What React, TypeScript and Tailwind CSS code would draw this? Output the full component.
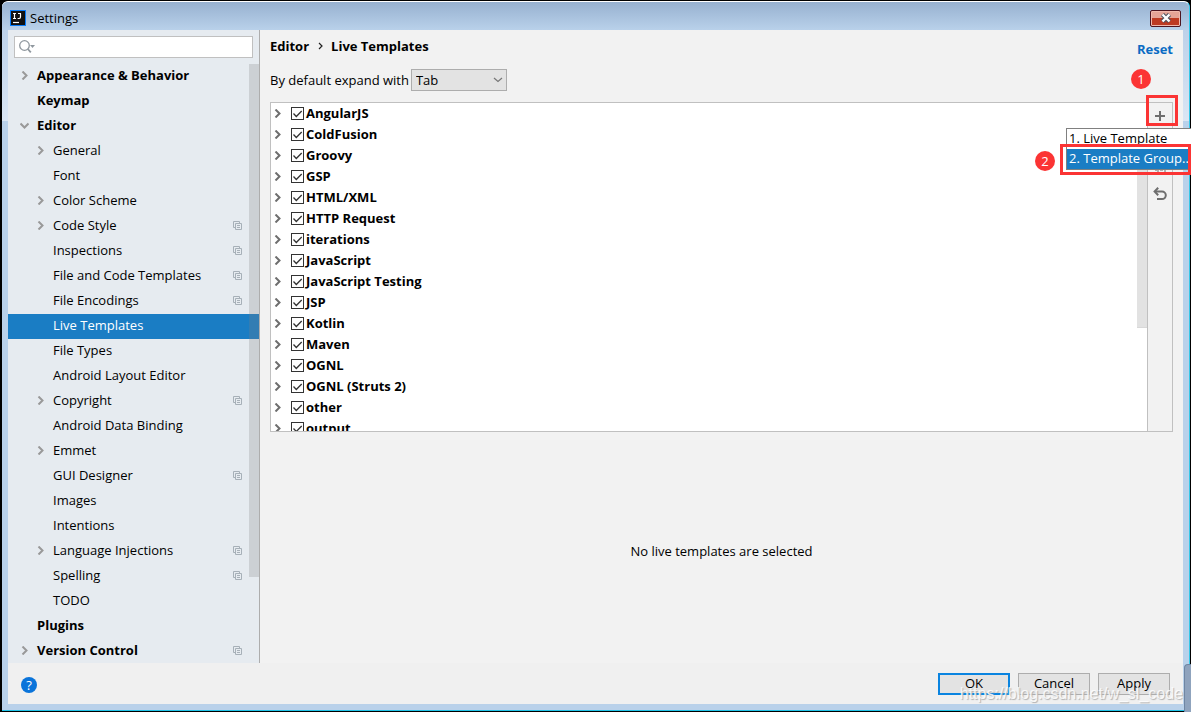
import { clsx } from "clsx";
import { useState, type ReactNode } from "react";

type TreeItem = {
  label: string;
  level: 0 | 1;
  state?: "open" | "closed";
  shared?: boolean;
};

const TREE: TreeItem[] = [
  { label: "Appearance & Behavior", level: 0, state: "closed" },
  { label: "Keymap", level: 0 },
  { label: "Editor", level: 0, state: "open" },
  { label: "General", level: 1, state: "closed" },
  { label: "Font", level: 1 },
  { label: "Color Scheme", level: 1, state: "closed" },
  { label: "Code Style", level: 1, state: "closed", shared: true },
  { label: "Inspections", level: 1, shared: true },
  { label: "File and Code Templates", level: 1, shared: true },
  { label: "File Encodings", level: 1, shared: true },
  { label: "Live Templates", level: 1 },
  { label: "File Types", level: 1 },
  { label: "Android Layout Editor", level: 1 },
  { label: "Copyright", level: 1, state: "closed", shared: true },
  { label: "Android Data Binding", level: 1 },
  { label: "Emmet", level: 1, state: "closed" },
  { label: "GUI Designer", level: 1, shared: true },
  { label: "Images", level: 1 },
  { label: "Intentions", level: 1 },
  { label: "Language Injections", level: 1, state: "closed", shared: true },
  { label: "Spelling", level: 1, shared: true },
  { label: "TODO", level: 1 },
  { label: "Plugins", level: 0 },
  { label: "Version Control", level: 0, state: "closed", shared: true },
];

const GROUPS = [
  "AngularJS",
  "ColdFusion",
  "Groovy",
  "GSP",
  "HTML/XML",
  "HTTP Request",
  "iterations",
  "JavaScript",
  "JavaScript Testing",
  "JSP",
  "Kotlin",
  "Maven",
  "OGNL",
  "OGNL (Struts 2)",
  "other",
  "output",
];

export default function App() {
  return (
    <div className="relative flex h-screen flex-col overflow-hidden bg-black pt-px pr-px pb-px pl-0.5 font-['Open_Sans','Noto_Sans',sans-serif] text-[13px] leading-4 text-black">
      <div className="flex min-h-0 flex-1 flex-col rounded-t-md border-t border-r border-b border-t-white border-r-[#35c8e8] border-b-[#20c4e8] bg-[#b9d1ea] bg-linear-to-b from-[#b4cbe6] to-[#dae6f4] bg-size-[100%_119px] bg-no-repeat px-1.5 pb-1.5">
        <TitleBar />
        <div className="flex min-h-0 flex-1 flex-col bg-[#f0f0f0]">
          <div className="flex min-h-0 flex-1">
            <Sidebar />
            <LiveTemplates />
          </div>
          <Footer />
        </div>
      </div>
      <div className="absolute right-0 bottom-0 h-12 w-[7px] rounded-tl-sm border-t border-l border-[#6f86a3] bg-[#8fa3bd]" />
      <AddMenu />
      <Callouts />
      <span className="pointer-events-none absolute right-2 bottom-2 font-['Liberation_Sans',sans-serif] text-base leading-5 text-white/80 [text-shadow:1px_1px_1px_#b0b0b0]">
        https://blog.csdn.net/w_sl_code
      </span>
    </div>
  );
}

function TitleBar() {
  return (
    <header className="-mx-1.5 flex h-7 shrink-0 items-center gap-1 rounded-t-md bg-linear-to-b from-[#97b1d0] to-[#b9d1ea] pr-2 pl-2">
      <svg width="16" height="16" viewBox="0 0 16 16" className="mt-1">
        <rect width="16" height="16" fill="#087cfa" />
        <rect x="1" y="1" width="14" height="14" fill="#111" />
        <path
          d="M3 3.5h3M4.5 3.5v5M3 8.5h3M8 3.5h3M10.5 3.5v3.6q0 1.4-1.3 1.4H7.6"
          fill="none"
          stroke="#fff"
          strokeWidth="1.2"
        />
        <path d="M3 12.5h6" stroke="#fff" strokeWidth="1.2" />
      </svg>
      <h1 className="mt-1 flex-1">Settings</h1>
      <button
        type="button"
        aria-label="Close"
        className="mt-1 flex h-[17px] w-[31px] items-center justify-center rounded-xs border border-[#4d1520] bg-linear-to-b from-[#e5a497] from-45% to-[#bd3a22] to-50% shadow-[inset_0_0_0_1px_#f0b8ac]"
      >
        <svg width="12" height="10" viewBox="0 0 12 10">
          <path d="M2.5 1.5l7 7M9.5 1.5l-7 7" stroke="#4f5460" strokeWidth="4.4" />
          <path d="M2.5 1.5l7 7M9.5 1.5l-7 7" stroke="#fff" strokeWidth="2.4" />
        </svg>
      </button>
    </header>
  );
}

function Sidebar() {
  const [selected, setSelected] = useState("Live Templates");

  return (
    <aside className="flex w-[252px] shrink-0 flex-col border-r border-[#adadad] bg-[#e6ebf0]">
      <div className="px-1.5 pt-1.5 pb-1.5">
        <label className="flex h-[22px] items-center border border-[#c0c0c0] bg-white pl-1">
          <svg width="18" height="14" viewBox="0 0 18 14" fill="none">
            <circle cx="5.5" cy="5.5" r="4.8" stroke="#8f979e" strokeWidth="1.3" />
            <path d="M8.8 9l3 3.4" stroke="#8f979e" strokeWidth="1.8" />
            <path d="M11 5h5l-2.5 3z" fill="#8f979e" />
          </svg>
          <input
            type="search"
            aria-label="Search settings"
            className="w-full min-w-0 flex-1 outline-none"
          />
        </label>
      </div>
      <nav className="relative min-h-0 flex-1 overflow-hidden">
        <ul>
          {TREE.map((item) => (
            <li key={item.label}>
              <button
                type="button"
                onClick={() => setSelected(item.label)}
                className={clsx(
                  "flex h-[25px] w-full items-center pr-[17px] pb-0.5 text-left",
                  item.level === 0 ? "pl-3 font-bold" : "pl-7",
                  item.label === selected && "bg-[#1a7dc4] text-white",
                )}
              >
                <span className="flex w-[17px] shrink-0">
                  {item.state && (
                    <Chevron open={item.state === "open"} className="text-[#999]" />
                  )}
                </span>
                <span className="flex-1 pb-px">{item.label}</span>
                {item.shared && <SharedIcon />}
              </button>
            </li>
          ))}
        </ul>
        <div className="absolute top-0 right-0 h-[513px] w-2.5 bg-[#808080]/25" />
      </nav>
    </aside>
  );
}

function LiveTemplates() {
  return (
    <main className="flex min-w-0 flex-1 flex-col bg-[#f2f2f2] pr-2.5 pl-2.5">
      <div className="flex items-start justify-between pt-2 font-bold">
        <h2 className="flex items-center">
          Editor
          <svg width="22" height="10" viewBox="0 0 22 10" fill="none">
            <path d="M10 2l3 3-3 3" stroke="#222" strokeWidth="1.2" />
          </svg>
          Live Templates
        </h2>
        <a href="#reset" className="mt-[3px] text-[#0a6cc4]">
          Reset
        </a>
      </div>
      <div className="mt-3 flex items-center gap-0.5">
        <label htmlFor="expand" className="pb-px">
          By default expand with
        </label>
        <div className="relative">
          <select
            id="expand"
            className="h-[22px] w-24 appearance-none border border-[#adadad] bg-[#e3e3e3] pl-1"
          >
            <option>Tab</option>
            <option>Enter</option>
            <option>Space</option>
          </select>
          <svg
            width="10"
            height="6"
            viewBox="0 0 10 6"
            fill="none"
            className="pointer-events-none absolute top-2 right-1"
          >
            <path d="M1 1l4 3.5L9 1" stroke="#777" strokeWidth="1.2" />
          </svg>
        </div>
      </div>
      <div className="mt-[11px] flex h-[330px] border border-[#c0c0c0]">
        <ul className="relative min-w-0 flex-1 overflow-hidden bg-white">
          {GROUPS.map((name) => (
            <TemplateGroup key={name} name={name} />
          ))}
          <li
            aria-hidden
            className="absolute top-8 right-0 h-[193px] w-2.5 border-b border-[#d8d8d8] bg-[#e2e2e2]"
          />
        </ul>
        <div className="flex w-[25px] flex-col items-center border-l border-[#c0c0c0]">
          <ToolButton label="Add">
            <path d="M8 3v10M3 8h10" strokeWidth="2" />
          </ToolButton>
          <ToolButton label="Remove">
            <path d="M3 8h10" strokeWidth="2" />
          </ToolButton>
          <ToolButton label="Duplicate">
            <path d="M6 6h7v8H6zM4 11V4h7M8 10h3" strokeWidth="1" />
          </ToolButton>
          <ToolButton label="Restore defaults">
            <path d="M3 5.5h7a3.8 3.8 0 0 1 0 7.6H5" strokeWidth="2" />
            <path d="M6.2 1.8L2.6 5.5l3.6 3.7" strokeWidth="2" />
          </ToolButton>
        </div>
      </div>
      <p className="flex flex-1 items-center justify-center pt-1.5">
        No live templates are selected
      </p>
    </main>
  );
}

function TemplateGroup({ name }: { name: string }) {
  return (
    <li className="flex h-[21px] items-center gap-[9px] pl-0.5">
      <button type="button" aria-label={`Expand ${name}`}>
        <Chevron className="text-[#6e6e6e]" />
      </button>
      <label className="flex items-center font-bold">
        <span className="relative mr-0.5 flex">
          <input
            type="checkbox"
            defaultChecked
            className="peer size-[13px] appearance-none border border-[#333] bg-white"
          />
          <svg
            width="13"
            height="13"
            viewBox="0 0 13 13"
            fill="none"
            className="pointer-events-none invisible absolute top-0 left-0 peer-checked:visible"
          >
            <path d="M2.5 6.5l2.8 3L10.7 4" stroke="#333" strokeWidth="1.3" />
          </svg>
        </span>
        <span className="pb-px">{name}</span>
      </label>
    </li>
  );
}

function ToolButton({ label, children }: { label: string; children: ReactNode }) {
  return (
    <button
      type="button"
      aria-label={label}
      className="flex h-[26px] w-full items-center justify-center text-[#6e6e6e]"
    >
      <svg width="16" height="16" viewBox="0 0 16 16" fill="none" stroke="currentColor">
        {children}
      </svg>
    </button>
  );
}

function AddMenu() {
  return (
    <div
      role="menu"
      className="absolute top-32 right-0 w-[125px] border border-r-0 border-[#808080] bg-white"
    >
      <button
        type="button"
        role="menuitem"
        className="block h-5 w-full pb-0.5 pl-0.5 text-left whitespace-nowrap"
      >
        1. Live Template
      </button>
      <button
        type="button"
        role="menuitem"
        className="block h-5 w-full bg-[#1a7dc4] pb-0.5 pl-0.5 text-left whitespace-nowrap text-white"
      >
        2. Template Group...
      </button>
    </div>
  );
}

function Callouts() {
  return (
    <>
      <div className="pointer-events-none absolute top-[95px] right-[13px] h-[31px] w-8 border-3 border-[#fb3434]" />
      <div className="pointer-events-none absolute top-36 right-0 h-[31px] w-[131px] border-3 border-[#fb3434]" />
      <span className="absolute top-[69px] right-10 flex size-5 items-center justify-center rounded-full bg-[#fb3434] text-white">
        1
      </span>
      <span className="absolute top-[151px] right-[136px] flex size-5 items-center justify-center rounded-full bg-[#fb3434] text-white">
        2
      </span>
    </>
  );
}

function Footer() {
  return (
    <footer className="flex h-[41px] shrink-0 items-center gap-2 pr-[13px] pl-[13px]">
      <button
        type="button"
        aria-label="Help"
        className="mt-0.5 mr-auto flex size-4 items-center justify-center rounded-full bg-[#0a74da] text-white"
      >
        ?
      </button>
      <button
        type="button"
        className="h-[22px] w-[72px] border-2 border-[#0a84e0] bg-[#e3e3e3] pb-0.5"
      >
        OK
      </button>
      <button
        type="button"
        className="h-[22px] w-[72px] border border-[#adadad] bg-[#e3e3e3] pb-0.5"
      >
        Cancel
      </button>
      <button
        type="button"
        className="h-[22px] w-[72px] border border-[#adadad] bg-[#e3e3e3] pb-0.5"
      >
        Apply
      </button>
    </footer>
  );
}

function Chevron({ open, className }: { open?: boolean; className?: string }) {
  return (
    <svg
      width="9"
      height="9"
      viewBox="0 0 9 9"
      fill="none"
      stroke="currentColor"
      strokeWidth="2"
      className={className}
    >
      <path d={open ? "M0.5 2.5l4 4 4-4" : "M2.5 0.5l4 4-4 4"} />
    </svg>
  );
}

function SharedIcon() {
  return (
    <svg width="9" height="9" viewBox="0 0 9 9" fill="none" stroke="#a7b0b8">
      <path d="M2.5 6.5h-2v-6h6v2M2.5 2.5h6v6h-6zM4 4.5h3M4 6.5h3" />
    </svg>
  );
}
